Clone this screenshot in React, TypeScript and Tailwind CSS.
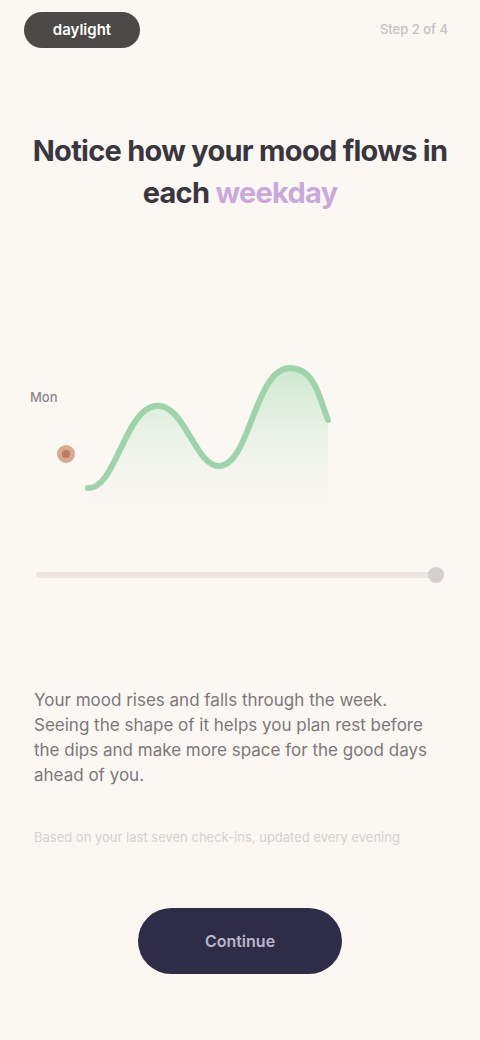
import React from 'react';

const Chart: React.FC = () => {
  return (
    <div className="relative h-[210px] w-full">
      <span className="absolute left-[30px] top-[48px] text-[13px] font-medium text-[#8d8890]">Mon</span>
      <svg viewBox="0 0 480 210" className="h-full w-full">
        <defs>
          <linearGradient id="fill" x1="0" y1="0" x2="0" y2="1">
            <stop offset="0%" stopColor="#a7dcb4" stopOpacity="0.55" />
            <stop offset="100%" stopColor="#d9f0de" stopOpacity="0" />
          </linearGradient>
        </defs>
        <path
          d="M88 148 C 115 150, 125 70, 155 66 C 185 62, 195 128, 220 126 C 250 124, 255 28, 290 28 C 315 28, 320 60, 328 80 L 328 170 L 88 170 Z"
          fill="url(#fill)"
        />
        <path
          d="M88 148 C 115 150, 125 70, 155 66 C 185 62, 195 128, 220 126 C 250 124, 255 28, 290 28 C 315 28, 320 60, 328 80"
          fill="none"
          stroke="#9fd3ab"
          strokeWidth="6"
          strokeLinecap="round"
        />
        <circle cx="66" cy="114" r="9" fill="#d9a88f" />
        <circle cx="66" cy="114" r="4" fill="#b97b63" />
      </svg>
    </div>
  );
};

const App: React.FC = () => {
  return (
    <div
      className="min-h-[1040px] w-full bg-[#fbf7f2] text-[#2f2c33] flex flex-col"
      style={{ fontFamily: 'Inter, "Noto Sans", sans-serif' }}
    >
      {/* top bar */}
      <header className="flex items-center justify-between px-6 pt-3">
        <div className="flex h-9 w-[116px] items-center justify-center rounded-full bg-[#4b4845] text-[15px] font-semibold text-white">
          daylight
        </div>
        <span className="pr-2 text-[13px] font-medium text-[#c9c1bf]">Step 2 of 4</span>
      </header>

      {/* headline */}
      <h1 className="mt-[82px] px-8 text-center text-[29px] font-bold leading-[42px] tracking-tight text-[#3a3640]">
        Notice how your mood flows in
        <br />
        each <span className="text-[#c9a9dc]">weekday</span>
      </h1>

      {/* chart */}
      <div className="mt-[126px]">
        <Chart />
      </div>

      {/* scrubber */}
      <div className="mt-[22px] px-[36px]">
        <div className="relative h-[6px] rounded-full bg-[#ebe4e2]">
          <div className="absolute right-0 top-1/2 h-4 w-4 -translate-y-1/2 rounded-full bg-[#d6cfcf]" />
        </div>
      </div>

      {/* copy */}
      <p className="mt-[110px] pl-[34px] pr-[52px] text-[17px] leading-[25px] text-[#7d777c]">
        Your mood rises and falls through the week. Seeing the shape of it helps you plan rest
        before the dips and make more space for the good days ahead of you.
      </p>
      <p className="mt-[40px] px-[34px] text-[13px] text-[#d8d0cd]">
        Based on your last seven check-ins, updated every evening
      </p>

      {/* button */}
      <div className="mt-[60px] flex justify-center">
        <button className="h-[66px] w-[204px] rounded-full bg-[#2f2c48] text-[16px] font-semibold text-[#b9b6cc]">
          Continue
        </button>
      </div>
    </div>
  );
};

export default App;
